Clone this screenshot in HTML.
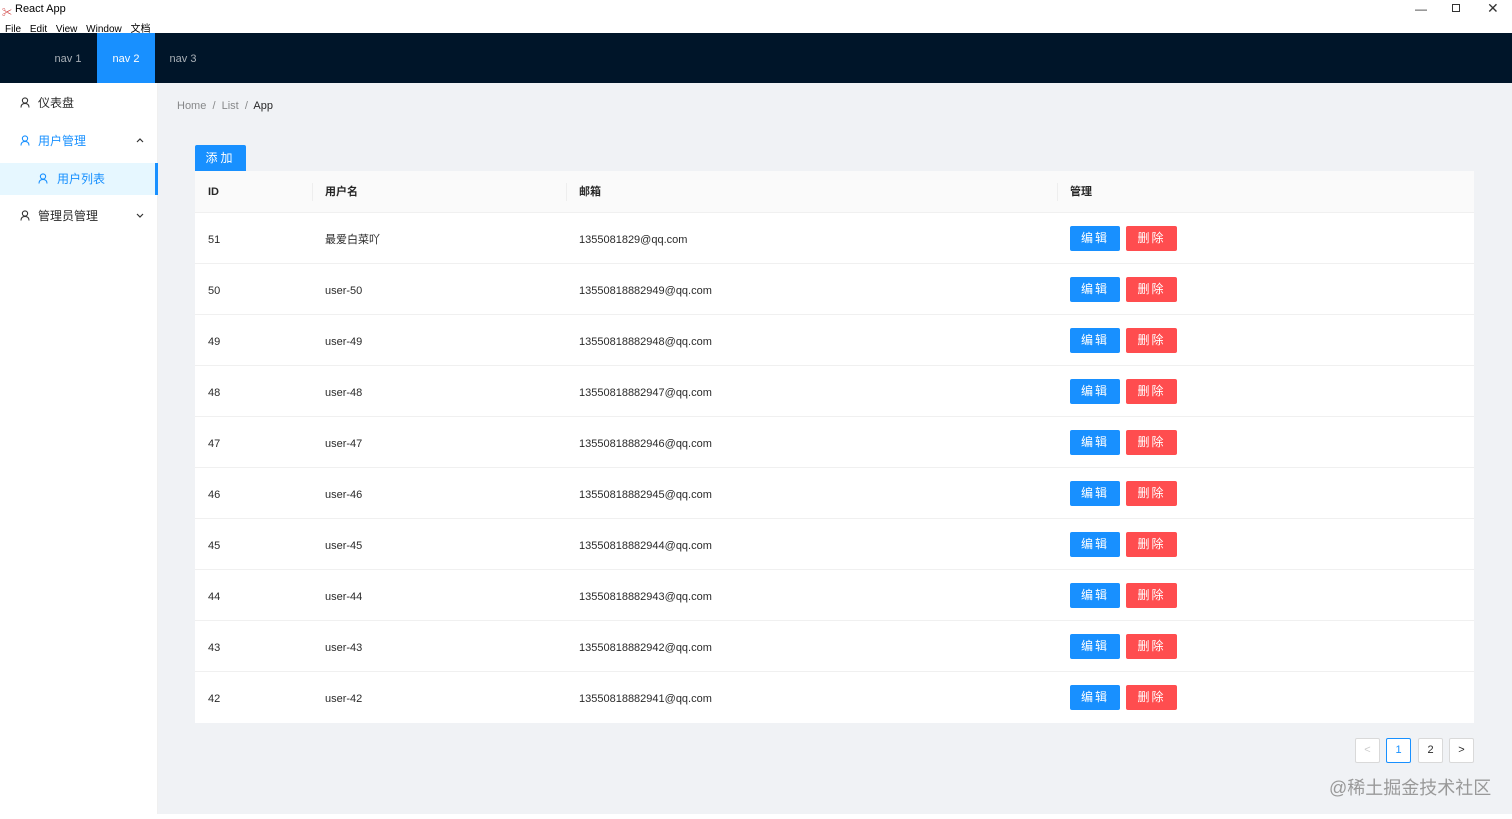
<!DOCTYPE html><html><head><meta charset="utf-8"><style>
*{box-sizing:border-box;margin:0;padding:0}
body{width:1512px;height:819px;overflow:hidden;font-family:"Liberation Sans","Noto Sans CJK SC",sans-serif;font-size:12px;color:rgba(0,0,0,.85);background:#f0f2f5;position:relative}
.tb{position:absolute;left:0;top:0;width:1512px;height:33px;background:#fff}
.hd{position:absolute;left:0;top:33px;width:1512px;height:50px;background:#001529}
.nv{position:absolute;top:0;height:50px;line-height:52px;color:rgba(255,255,255,.65);font-size:11px;text-align:center;width:58px}
.sd{position:absolute;left:0;top:83px;width:158px;height:731px;background:#fff;border-right:1px solid #f0f0f0}
.mi{position:absolute;left:0;width:158px;height:38px;line-height:38px;font-size:12px}
.ic{position:absolute;top:13px;width:10px;height:11px}
.tbl{position:absolute;left:195px;top:171px;width:1279px;background:#fff}
.row{position:relative;height:51px;border-bottom:1px solid #f0f0f0}
.row .t,.th .t{position:absolute;top:2px;line-height:51px;font-size:11px}
.th{position:relative;height:42px;background:#fafafa;border-bottom:1px solid #f0f0f0}
.th .t{top:0;line-height:43px;font-weight:bold;font-size:11px}
.sep{position:absolute;top:12px;width:1px;height:18px;background:#eee}
.row .b{position:absolute;top:13px;height:25px;width:50px;color:#fff;text-align:center;line-height:25px;font-size:12px;letter-spacing:2px;border-radius:2px}
.pg{position:absolute;top:738px;width:25px;height:25px;border:1px solid #d9d9d9;background:#fff;border-radius:2px;text-align:center;line-height:23px;font-size:11px}
</style></head><body>
<div class="tb">
<div style="position:absolute;left:2px;top:4px;font-size:10px;color:#c33">✂</div>
<div style="position:absolute;left:15px;top:3px;font-size:11px;color:#000">React App</div>
<div style="position:absolute;left:5px;top:20px;font-size:10px;color:#000;word-spacing:6px">File Edit View Window 文档</div>
<div style="position:absolute;left:1415px;top:2px;font-size:12px;color:#333">—</div>
<div style="position:absolute;left:1452px;top:4px;width:8px;height:8px;border:1px solid #333"></div>
<div style="position:absolute;left:1487px;top:0px;font-size:14px;color:#333">✕</div>
</div>
<div class="hd">
<div class="nv" style="left:39px">nav 1</div>
<div class="nv" style="left:97px;background:#1890ff;color:#fff">nav 2</div>
<div class="nv" style="left:154px">nav 3</div>
</div>
<div class="sd">
<div class="mi" style="top:1px"><svg class="ic" style="left:20px" viewBox="0 0 10 11"><circle cx="5" cy="3.5" r="2.6" fill="none" stroke="#333" stroke-width="1.1"/><path d="M1 10.5c0-3 2-4 4-4s4 1 4 4" fill="none" stroke="#333" stroke-width="1.1"/></svg><span style="position:absolute;left:38px">仪表盘</span></div>
<div class="mi" style="top:39px;color:#1890ff"><svg class="ic" style="left:20px" viewBox="0 0 10 11"><circle cx="5" cy="3.5" r="2.6" fill="none" stroke="#1890ff" stroke-width="1.1"/><path d="M1 10.5c0-3 2-4 4-4s4 1 4 4" fill="none" stroke="#1890ff" stroke-width="1.1"/></svg><span style="position:absolute;left:38px">用户管理</span><svg style="position:absolute;left:136px;top:16px" width="8" height="5" viewBox="0 0 8 5"><path d="M1 4L4 1L7 4" fill="none" stroke="#333" stroke-width="1.2"/></svg></div>
<div class="mi" style="background:#e6f7ff;color:#1890ff;border-right:3px solid #1890ff;height:32px;line-height:32px;top:80px"><svg class="ic" style="left:38px;top:10px" viewBox="0 0 10 11"><circle cx="5" cy="3.5" r="2.6" fill="none" stroke="#1890ff" stroke-width="1.1"/><path d="M1 10.5c0-3 2-4 4-4s4 1 4 4" fill="none" stroke="#1890ff" stroke-width="1.1"/></svg><span style="position:absolute;left:57px">用户列表</span></div>
<div class="mi" style="top:114px"><svg class="ic" style="left:20px" viewBox="0 0 10 11"><circle cx="5" cy="3.5" r="2.6" fill="none" stroke="#333" stroke-width="1.1"/><path d="M1 10.5c0-3 2-4 4-4s4 1 4 4" fill="none" stroke="#333" stroke-width="1.1"/></svg><span style="position:absolute;left:38px">管理员管理</span><svg style="position:absolute;left:136px;top:16px" width="8" height="5" viewBox="0 0 8 5"><path d="M1 1L4 4L7 1" fill="none" stroke="#333" stroke-width="1.2"/></svg></div>
</div>
<div style="position:absolute;left:177px;top:100px;font-size:11px;color:rgba(0,0,0,.45)">Home &nbsp;/&nbsp; List &nbsp;/&nbsp; <span style="color:rgba(0,0,0,.85)">App</span></div>
<div style="position:absolute;left:195px;top:145px;width:51px;height:26px;background:#1890ff;color:#fff;line-height:27px;text-align:center;font-size:12px;letter-spacing:3px;border-radius:2px 2px 0 0">添加</div>
<div class="tbl">
<div class="th"><div class="t" style="left:13px">ID</div><span class="sep" style="left:117px"></span><div class="t" style="left:130px">用户名</div><span class="sep" style="left:371px"></span><div class="t" style="left:384px">邮箱</div><span class="sep" style="left:862px"></span><div class="t" style="left:875px">管理</div></div>
<div class="row"><div class="t" style="left:13px">51</div><div class="t" style="left:130px">最爱白菜吖</div><div class="t" style="left:384px">1355081829@qq.com</div><div class="b" style="left:875px;background:#1890ff">编辑</div><div class="b" style="left:931px;width:51px;background:#ff4d4f">删除</div></div>
<div class="row"><div class="t" style="left:13px">50</div><div class="t" style="left:130px">user-50</div><div class="t" style="left:384px">13550818882949@qq.com</div><div class="b" style="left:875px;background:#1890ff">编辑</div><div class="b" style="left:931px;width:51px;background:#ff4d4f">删除</div></div>
<div class="row"><div class="t" style="left:13px">49</div><div class="t" style="left:130px">user-49</div><div class="t" style="left:384px">13550818882948@qq.com</div><div class="b" style="left:875px;background:#1890ff">编辑</div><div class="b" style="left:931px;width:51px;background:#ff4d4f">删除</div></div>
<div class="row"><div class="t" style="left:13px">48</div><div class="t" style="left:130px">user-48</div><div class="t" style="left:384px">13550818882947@qq.com</div><div class="b" style="left:875px;background:#1890ff">编辑</div><div class="b" style="left:931px;width:51px;background:#ff4d4f">删除</div></div>
<div class="row"><div class="t" style="left:13px">47</div><div class="t" style="left:130px">user-47</div><div class="t" style="left:384px">13550818882946@qq.com</div><div class="b" style="left:875px;background:#1890ff">编辑</div><div class="b" style="left:931px;width:51px;background:#ff4d4f">删除</div></div>
<div class="row"><div class="t" style="left:13px">46</div><div class="t" style="left:130px">user-46</div><div class="t" style="left:384px">13550818882945@qq.com</div><div class="b" style="left:875px;background:#1890ff">编辑</div><div class="b" style="left:931px;width:51px;background:#ff4d4f">删除</div></div>
<div class="row"><div class="t" style="left:13px">45</div><div class="t" style="left:130px">user-45</div><div class="t" style="left:384px">13550818882944@qq.com</div><div class="b" style="left:875px;background:#1890ff">编辑</div><div class="b" style="left:931px;width:51px;background:#ff4d4f">删除</div></div>
<div class="row"><div class="t" style="left:13px">44</div><div class="t" style="left:130px">user-44</div><div class="t" style="left:384px">13550818882943@qq.com</div><div class="b" style="left:875px;background:#1890ff">编辑</div><div class="b" style="left:931px;width:51px;background:#ff4d4f">删除</div></div>
<div class="row"><div class="t" style="left:13px">43</div><div class="t" style="left:130px">user-43</div><div class="t" style="left:384px">13550818882942@qq.com</div><div class="b" style="left:875px;background:#1890ff">编辑</div><div class="b" style="left:931px;width:51px;background:#ff4d4f">删除</div></div>
<div class="row" style="border-bottom:none"><div class="t" style="left:13px">42</div><div class="t" style="left:130px">user-42</div><div class="t" style="left:384px">13550818882941@qq.com</div><div class="b" style="left:875px;background:#1890ff">编辑</div><div class="b" style="left:931px;width:51px;background:#ff4d4f">删除</div></div>
</div>
<div class="pg" style="left:1355px;color:#ccc">&lt;</div>
<div class="pg" style="left:1386px;border-color:#1890ff;color:#1890ff">1</div>
<div class="pg" style="left:1418px">2</div>
<div class="pg" style="left:1449px">&gt;</div>
<div style="position:absolute;left:1329px;top:774px;font-size:18px;color:#999;white-space:nowrap">@稀土掘金技术社区</div>
<div style="position:absolute;left:0;top:814px;width:1512px;height:5px;background:#fff"></div>
</body></html>
